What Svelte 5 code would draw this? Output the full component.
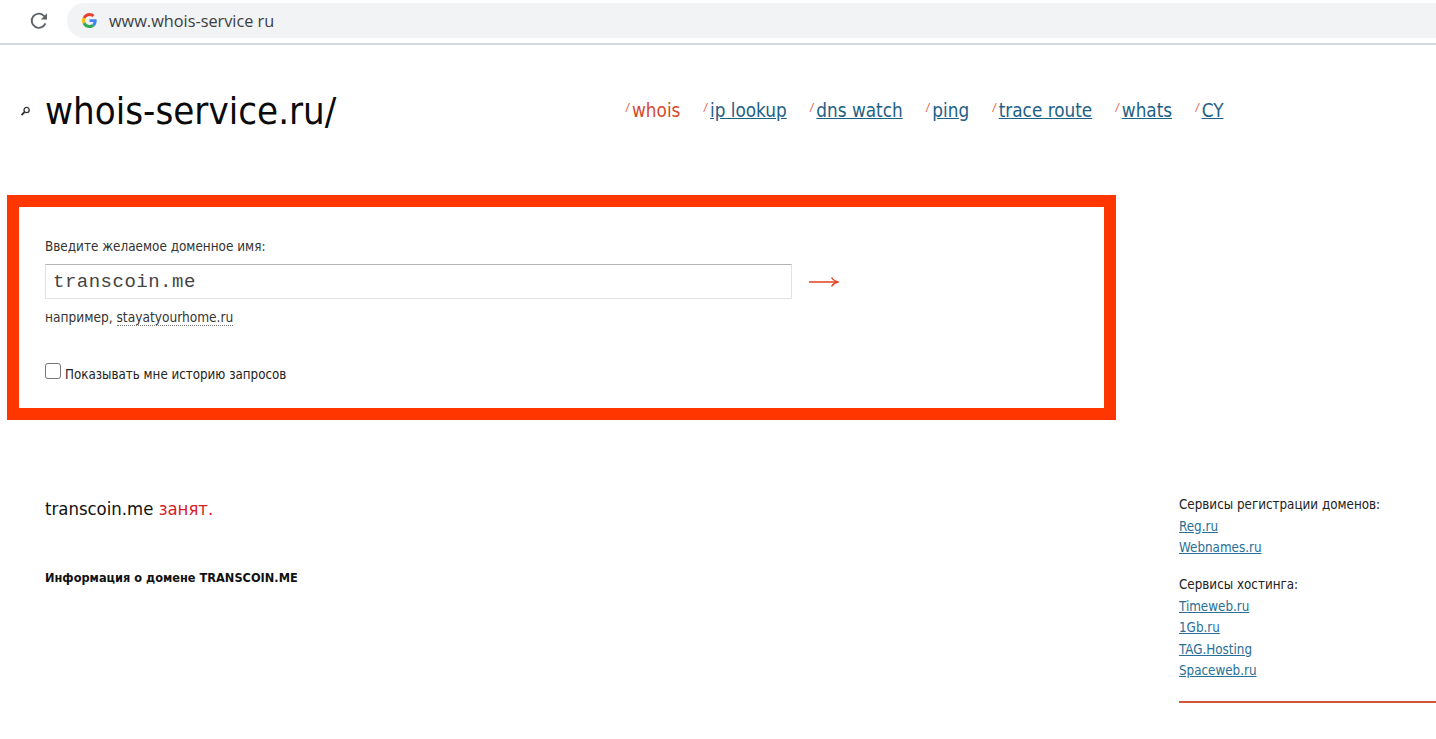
<script>
  const nav = [
    { label: 'whois', active: true },
    { label: 'ip lookup' },
    { label: 'dns watch' },
    { label: 'ping' },
    { label: 'trace route' },
    { label: 'whats' },
    { label: 'CY' }
  ];
  const registrars = ['Reg.ru', 'Webnames.ru'];
  const hosts = ['Timeweb.ru', '1Gb.ru', 'TAG.Hosting', 'Spaceweb.ru'];
</script>

<div class="page">
  <div class="chrome">
    <svg class="reload" width="18" height="18" viewBox="0 0 18 18" fill="none">
      <path d="M15.4 11.400A7.100 7.100 0 1 1 13.900 3.800L16 6" stroke="#5f6368" stroke-width="1.900"/>
      <path d="M17 1.300V7.500H10.800Z" fill="#5f6368"/>
    </svg>
    <div class="omnibox">
      <svg class="g" width="15" height="15" viewBox="0 0 48 48">
        <path fill="#EA4335" d="M24 9.5c3.5 0 6.700 1.200 9.200 3.600l6.900-6.900C35.900 2.400 30.500 0 24 0 14.600 0 6.500 5.400 2.600 13.200l8 6.200C12.500 13.700 17.800 9.500 24 9.500z"/>
        <path fill="#4285F4" d="M46.900 24.500c0-1.600-.1-3.100-.4-4.500H24v9h12.900c-.6 3-2.200 5.500-4.800 7.200l7.700 6c4.500-4.200 7.100-10.300 7.100-17.700z"/>
        <path fill="#FBBC05" d="M10.500 28.600c-.5-1.400-.8-3-.8-4.600s.3-3.200.8-4.600l-8-6.200C.9 16.500 0 20.100 0 24s.9 7.500 2.600 10.800l7.900-6.200z"/>
        <path fill="#34A853" d="M24 48c6.500 0 11.900-2.100 15.900-5.800l-7.700-6c-2.100 1.400-4.900 2.300-8.200 2.300-6.200 0-11.500-4.200-13.400-9.900l-8 6.200C6.500 42.600 14.600 48 24 48z"/>
      </svg>
      <span class="url">www.whois-service ru</span>
    </div>
  </div>

  <header class="head">
    <div class="brand">
      <svg class="lens" width="11" height="11" viewBox="0 0 11 11" fill="none">
        <circle cx="6.600" cy="4" r="2.600" stroke="#333" stroke-width="1.300"/>
        <path d="M4.600 6 1.500 9.200" stroke="#333" stroke-width="1.800"/>
      </svg>
      <span class="title">whois-service.ru/</span>
    </div>
    <nav class="nav">
      {#each nav as item}
        <span class="item">
          <i class="slash">/</i>{#if item.active}<span class="on">{item.label}</span>{:else}<a href="#top">{item.label}</a>{/if}
        </span>
      {/each}
    </nav>
  </header>

  <section class="box">
    <label class="prompt" for="domain">Введите желаемое доменное имя:</label>
    <div class="field">
      <input id="domain" value="transcoin.me" />
      <svg class="arrow" width="30" height="12" viewBox="0 0 30 12" fill="none">
        <path d="M0 6H28" stroke="#e2401f" stroke-width="1.500"/>
        <path d="M22.500 1.500C24 4 26 5.300 29.500 6C26 6.700 24 8 22.500 10.500" stroke="#e2401f" stroke-width="1.400"/>
      </svg>
    </div>
    <p class="example">например, <span class="dotted">stayatyourhome.ru</span></p>
    <div class="history">
      <span class="check"></span>
      <span>Показывать мне историю запросов</span>
    </div>
  </section>

  <div class="lower">
    <main class="result">
      <p class="status">transcoin.me <span class="busy">занят.</span></p>
      <p class="info">Информация о домене TRANSCOIN.ME</p>
    </main>
    <aside class="side">
      <p class="side-h">Сервисы регистрации доменов:</p>
      {#each registrars as r}<a class="side-l" href="#top">{r}</a>{/each}
      <p class="side-h second">Сервисы хостинга:</p>
      {#each hosts as h}<a class="side-l" href="#top">{h}</a>{/each}
      <div class="rule"></div>
    </aside>
  </div>
</div>

<style>
  :global(body) {
    margin: 0;
    background: #fff;
    overflow: hidden;
  }
  .page {
    font-family: "DejaVu Sans Condensed", "DejaVu Sans", sans-serif;
    font-stretch: condensed;
    color: #111;
    height: 739px;
    overflow: hidden;
  }
  .chrome {
    height: 45px;
    box-sizing: border-box;
    border-bottom: 2px solid #d4d8da;
    display: flex;
    align-items: flex-start;
    padding: 3px 0 0 30px;
  }
  .reload { margin-top: 9px; }
  .omnibox {
    margin-left: 19px;
    flex: 1;
    height: 35px;
    border-radius: 18px 0 0 18px;
    background: #f1f3f4;
    display: flex;
    align-items: center;
    padding-left: 15px;
  }
  .url {
    margin-left: 12px;
    font: 16.300px "Open Sans", sans-serif;
    color: #3c4043;
  }
  .head {
    display: flex;
    align-items: center;
    height: 52px;
    margin-top: 38px;
  }
  .brand {
    display: flex;
    align-items: center;
    width: 626px;
    flex: none;
    padding-left: 20px;
    box-sizing: border-box;
  }
  .lens { margin-top: 4px; }
  .title {
    margin: 3px 0 0 14px;
    font-size: 38.100px;
    color: #0a0a0a;
  }
  .nav {
    display: flex;
    gap: 23.500px;
    margin-top: 2px;
    font-size: 18.800px;
  }
  .item { white-space: nowrap; }
  .slash {
    font-size: 10px;
    color: #e2401f;
    vertical-align: 6px;
    margin-right: 3px;
  }
  .on { color: #d8482a; }
  .nav a { color: #1d6186; text-decoration: underline; }
  .box {
    margin: 60px 0 0 7px;
    width: 1109px;
    height: 225px;
    box-sizing: border-box;
    border: 12px solid #ff3600;
    padding: 32px 26px 0;
    font-size: 13.400px;
    color: #333;
  }
  .prompt {
    display: block;
    line-height: 16px;
  }
  .field {
    display: flex;
    align-items: center;
    margin-top: 9px;
  }
  input {
    width: 747px;
    height: 35px;
    box-sizing: border-box;
    border: 1px solid #e2e2e2;
    border-top-color: #b5b5b5;
    padding: 0 7px;
    font: 19px "Liberation Mono", monospace;
    letter-spacing: 0.5px;
    color: #444;
    outline: none;
  }
  .arrow { margin-left: 17px; }
  .example {
    margin: 10px 0 0;
    line-height: 16px;
    font-size: 13.600px;
  }
  .dotted { border-bottom: 1px dotted #777; }
  .history {
    display: flex;
    align-items: flex-end;
    gap: 4px;
    margin-top: 38px;
    font-size: 13.250px;
    line-height: 16px;
    color: #222;
  }
  .check {
    width: 14px;
    height: 14px;
    border: 1px solid #767676;
    border-radius: 3px;
    margin-bottom: 4px;
  }
  .lower {
    display: flex;
    margin-top: 74px;
  }
  .result {
    width: 1134px;
    flex: none;
    padding-left: 45px;
    box-sizing: border-box;
  }
  .status {
    margin: 4px 0 0;
    font-size: 18.400px;
    line-height: 22px;
    color: #111;
  }
  .busy { color: #d9202a; }
  .info {
    margin: 50px 0 0;
    font-size: 12.650px;
    font-weight: 700;
    line-height: 16px;
    color: #111;
  }
  .side {
    margin-left: 45px;
    flex: 1;
    font-size: 13.300px;
  }
  .side-h {
    margin: 2px 0 0;
    line-height: 17px;
    color: #222;
  }
  .side-h.second { margin-top: 20px; }
  .side-l {
    display: block;
    margin-top: 4.500px;
    line-height: 17px;
    color: #2a6f97;
    text-decoration: underline;
  }
  .rule {
    margin-top: 22px;
    height: 2px;
    background: #d0553a;
  }
</style>
